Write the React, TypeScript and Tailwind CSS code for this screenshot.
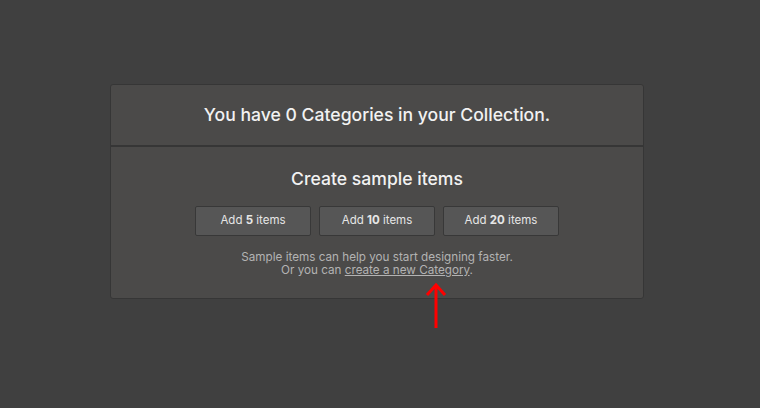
export default function App() {
  const counts = [5, 10, 20];
  return (
    <div className="relative w-[760px] h-[408px] bg-[#404040] pt-[84px] font-['Inter','Liberation_Sans',sans-serif]">
      <div className="ml-[110px] w-[534px] rounded-[3px] border border-[#363636] bg-[#4b4a49]">
        <div className="h-[62px] flex items-center justify-center border-b-2 border-[#363636]">
          <h1 className="text-[17.6px] font-medium text-[#f2f2f2]">
            You have 0 Categories in your Collection.
          </h1>
        </div>
        <div className="h-[151px] flex flex-col items-center pt-[21px]">
          <h2 className="text-[17.6px] font-medium text-[#f2f2f2] leading-[22px]">Create sample items</h2>
          <div className="mt-[16px] flex gap-[8px]">
            {counts.map((n) => (
              <button
                key={n}
                className="w-[116px] h-[30px] rounded-[2px] border border-[#383838] bg-[#565656] text-[11.5px] text-[#e6e6e6]"
              >
                Add <span className="font-bold">{n}</span> items
              </button>
            ))}
          </div>
          <p className="mt-[15px] text-[11.7px] leading-[13px] text-[#b3b3b3] text-center">
            Sample items can help you start designing faster.
            <br />
            Or you can <span className="underline">create a new Category</span>.
          </p>
        </div>
      </div>
      <svg className="absolute left-[425px] top-[282px]" width="22" height="48" viewBox="0 0 22 48">
        <path d="M11 3 L11 46" stroke="#ff0000" strokeWidth="3" fill="none" />
        <path d="M2 13 L11 3 L20 13" stroke="#ff0000" strokeWidth="3" fill="none" />
      </svg>
    </div>
  );
}
